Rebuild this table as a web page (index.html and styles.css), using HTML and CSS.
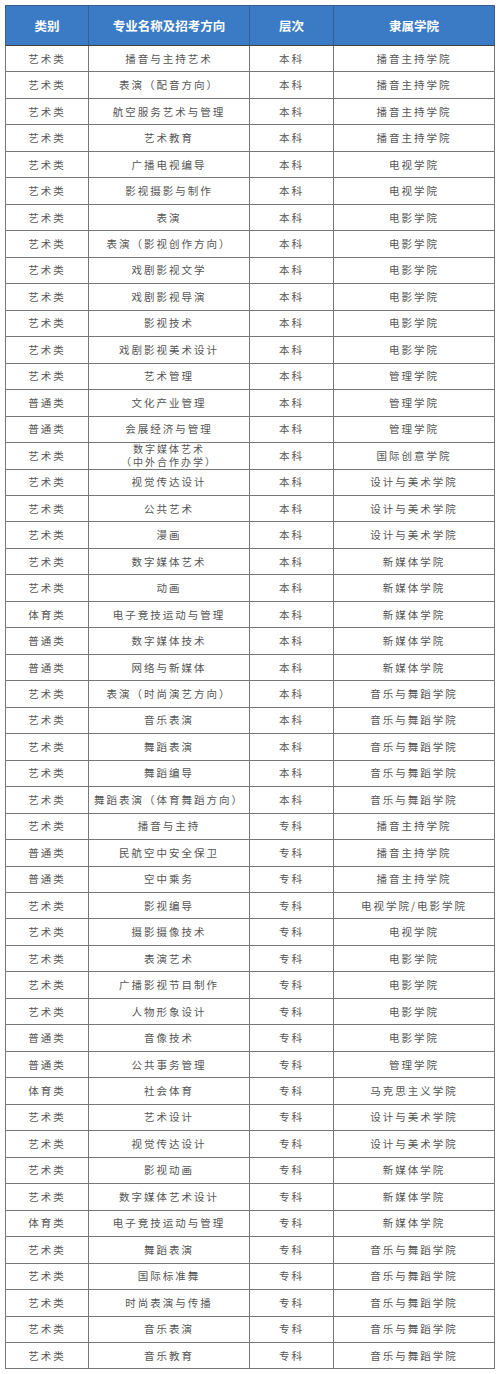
FILE: index.html
```html
<!DOCTYPE html>
<html lang="zh">
<head>
<meta charset="utf-8">
<link rel="stylesheet" href="styles.css">
</head>
<body>
<table class="majors">
<colgroup><col class="c1"><col class="c2"><col class="c3"><col class="c4"></colgroup>
<thead>
<tr><th>类别</th><th>专业名称及招考方向</th><th>层次</th><th>隶属学院</th></tr>
</thead>
<tbody>
<tr><td>艺术类</td><td>播音与主持艺术</td><td>本科</td><td>播音主持学院</td></tr>
<tr><td>艺术类</td><td>表演（配音方向）</td><td>本科</td><td>播音主持学院</td></tr>
<tr><td>艺术类</td><td>航空服务艺术与管理</td><td>本科</td><td>播音主持学院</td></tr>
<tr><td>艺术类</td><td>艺术教育</td><td>本科</td><td>播音主持学院</td></tr>
<tr><td>艺术类</td><td>广播电视编导</td><td>本科</td><td>电视学院</td></tr>
<tr><td>艺术类</td><td>影视摄影与制作</td><td>本科</td><td>电视学院</td></tr>
<tr><td>艺术类</td><td>表演</td><td>本科</td><td>电影学院</td></tr>
<tr><td>艺术类</td><td>表演（影视创作方向）</td><td>本科</td><td>电影学院</td></tr>
<tr><td>艺术类</td><td>戏剧影视文学</td><td>本科</td><td>电影学院</td></tr>
<tr><td>艺术类</td><td>戏剧影视导演</td><td>本科</td><td>电影学院</td></tr>
<tr><td>艺术类</td><td>影视技术</td><td>本科</td><td>电影学院</td></tr>
<tr><td>艺术类</td><td>戏剧影视美术设计</td><td>本科</td><td>电影学院</td></tr>
<tr><td>艺术类</td><td>艺术管理</td><td>本科</td><td>管理学院</td></tr>
<tr><td>普通类</td><td>文化产业管理</td><td>本科</td><td>管理学院</td></tr>
<tr><td>普通类</td><td>会展经济与管理</td><td>本科</td><td>管理学院</td></tr>
<tr><td>艺术类</td><td class="two">数字媒体艺术<br>（中外合作办学）</td><td>本科</td><td>国际创意学院</td></tr>
<tr><td>艺术类</td><td>视觉传达设计</td><td>本科</td><td>设计与美术学院</td></tr>
<tr><td>艺术类</td><td>公共艺术</td><td>本科</td><td>设计与美术学院</td></tr>
<tr><td>艺术类</td><td>漫画</td><td>本科</td><td>设计与美术学院</td></tr>
<tr><td>艺术类</td><td>数字媒体艺术</td><td>本科</td><td>新媒体学院</td></tr>
<tr><td>艺术类</td><td>动画</td><td>本科</td><td>新媒体学院</td></tr>
<tr><td>体育类</td><td>电子竞技运动与管理</td><td>本科</td><td>新媒体学院</td></tr>
<tr><td>普通类</td><td>数字媒体技术</td><td>本科</td><td>新媒体学院</td></tr>
<tr><td>普通类</td><td>网络与新媒体</td><td>本科</td><td>新媒体学院</td></tr>
<tr><td>艺术类</td><td>表演（时尚演艺方向）</td><td>本科</td><td>音乐与舞蹈学院</td></tr>
<tr><td>艺术类</td><td>音乐表演</td><td>本科</td><td>音乐与舞蹈学院</td></tr>
<tr><td>艺术类</td><td>舞蹈表演</td><td>本科</td><td>音乐与舞蹈学院</td></tr>
<tr><td>艺术类</td><td>舞蹈编导</td><td>本科</td><td>音乐与舞蹈学院</td></tr>
<tr><td>艺术类</td><td>舞蹈表演（体育舞蹈方向）</td><td>本科</td><td>音乐与舞蹈学院</td></tr>
<tr><td>艺术类</td><td>播音与主持</td><td>专科</td><td>播音主持学院</td></tr>
<tr><td>普通类</td><td>民航空中安全保卫</td><td>专科</td><td>播音主持学院</td></tr>
<tr><td>普通类</td><td>空中乘务</td><td>专科</td><td>播音主持学院</td></tr>
<tr><td>艺术类</td><td>影视编导</td><td>专科</td><td>电视学院/电影学院</td></tr>
<tr><td>艺术类</td><td>摄影摄像技术</td><td>专科</td><td>电视学院</td></tr>
<tr><td>艺术类</td><td>表演艺术</td><td>专科</td><td>电影学院</td></tr>
<tr><td>艺术类</td><td>广播影视节目制作</td><td>专科</td><td>电影学院</td></tr>
<tr><td>艺术类</td><td>人物形象设计</td><td>专科</td><td>电影学院</td></tr>
<tr><td>普通类</td><td>音像技术</td><td>专科</td><td>电影学院</td></tr>
<tr><td>普通类</td><td>公共事务管理</td><td>专科</td><td>管理学院</td></tr>
<tr><td>体育类</td><td>社会体育</td><td>专科</td><td>马克思主义学院</td></tr>
<tr><td>艺术类</td><td>艺术设计</td><td>专科</td><td>设计与美术学院</td></tr>
<tr><td>艺术类</td><td>视觉传达设计</td><td>专科</td><td>设计与美术学院</td></tr>
<tr><td>艺术类</td><td>影视动画</td><td>专科</td><td>新媒体学院</td></tr>
<tr><td>艺术类</td><td>数字媒体艺术设计</td><td>专科</td><td>新媒体学院</td></tr>
<tr><td>体育类</td><td>电子竞技运动与管理</td><td>专科</td><td>新媒体学院</td></tr>
<tr><td>艺术类</td><td>舞蹈表演</td><td>专科</td><td>音乐与舞蹈学院</td></tr>
<tr><td>艺术类</td><td>国际标准舞</td><td>专科</td><td>音乐与舞蹈学院</td></tr>
<tr><td>艺术类</td><td>时尚表演与传播</td><td>专科</td><td>音乐与舞蹈学院</td></tr>
<tr><td>艺术类</td><td>音乐表演</td><td>专科</td><td>音乐与舞蹈学院</td></tr>
<tr><td>艺术类</td><td>音乐教育</td><td>专科</td><td>音乐与舞蹈学院</td></tr>
</tbody>
</table>
</body>
</html>
```
FILE: styles.css
```css
html, body {
  margin: 0;
  padding: 0;
  background: #ffffff;
}
body {
  padding: 5px 0 0 5px;
  font-family: "Noto Sans CJK SC", "Noto Sans", sans-serif;
}
.majors {
  border-collapse: collapse;
  table-layout: fixed;
  width: 489px;
  border: 1px solid #555;
}
.c1 { width: 83px; }
.c2 { width: 161px; }
.c3 { width: 84px; }
.c4 { width: 161px; }
.majors th {
  height: 39px;
  padding: 0;
  background: #3b7bc6;
  color: #ffffff;
  font-size: 12.5px;
  font-weight: bold;
  text-align: center;
  border: 1px solid #3a5f8c;
  border-bottom: 1px solid #444;
}
.majors td {
  height: 25.48px;
  padding: 0;
  font-size: 10.5px;
  line-height: 12px;
  letter-spacing: 2px;
  color: #555;
  text-align: center;
  border: 1px solid #777;
}
.majors td.two {
  font-size: 10px;
  line-height: 12.5px;
}
```
